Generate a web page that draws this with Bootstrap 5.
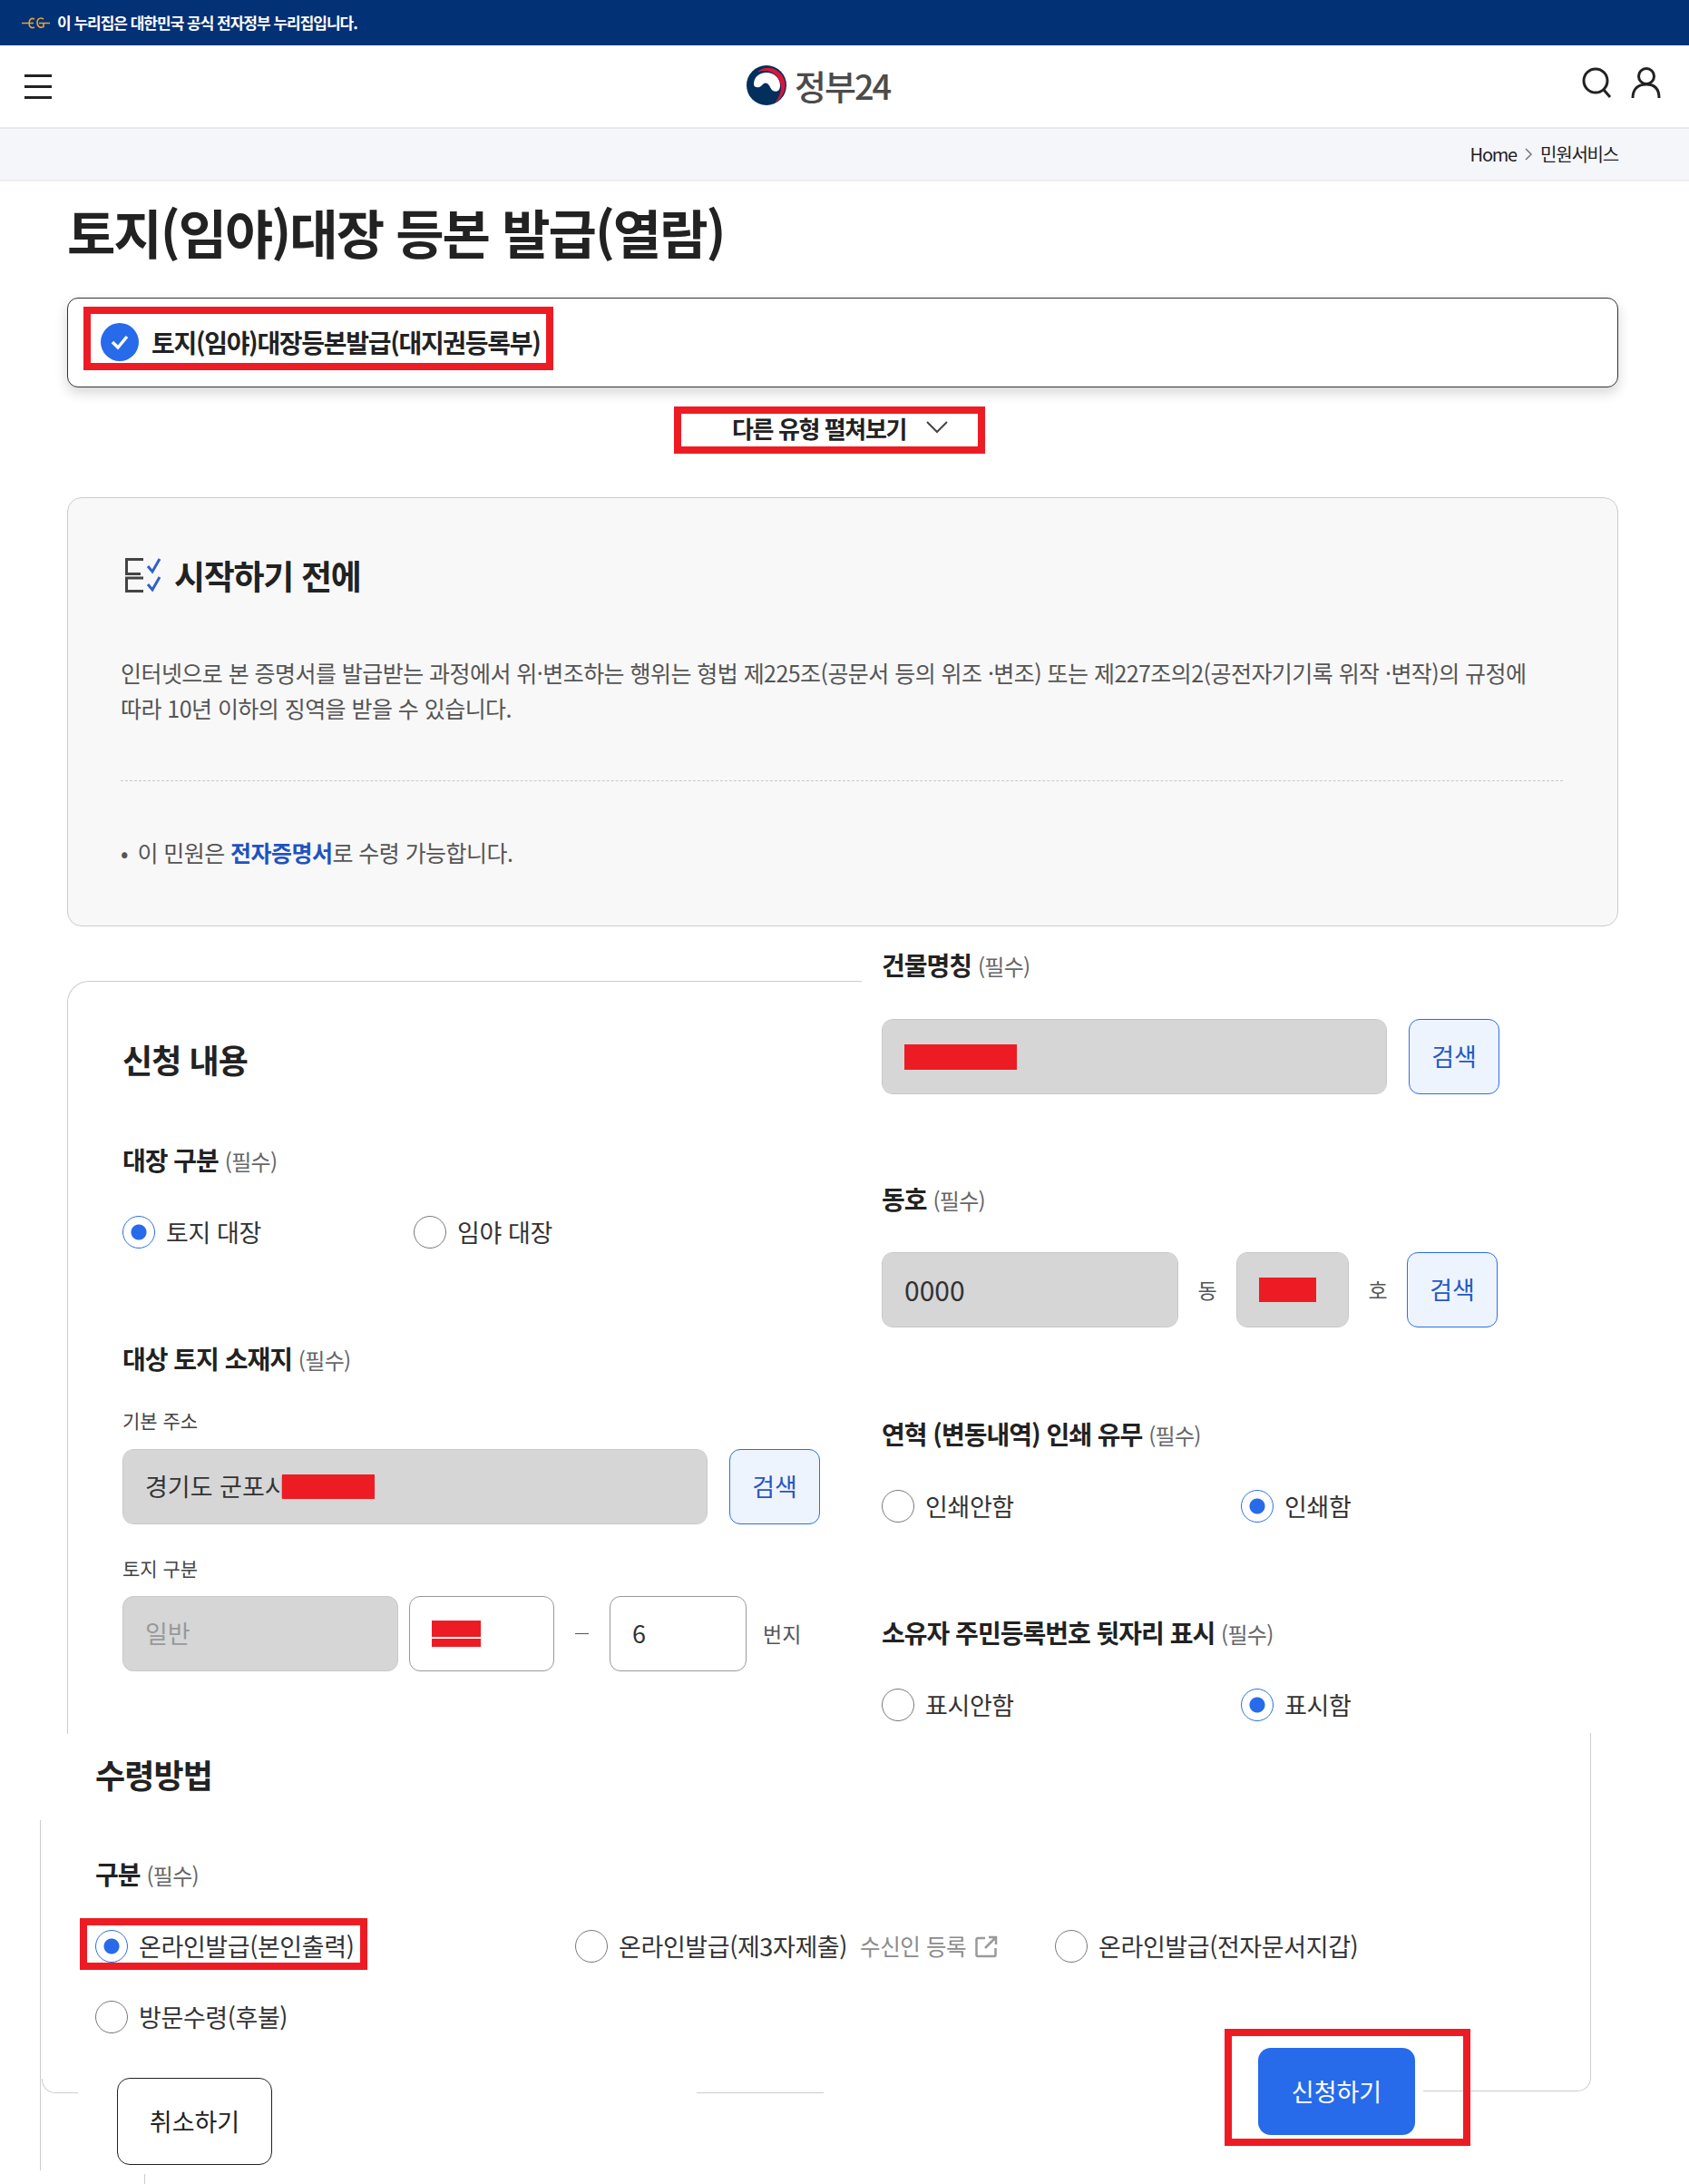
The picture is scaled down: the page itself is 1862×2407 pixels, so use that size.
<!DOCTYPE html>
<html lang="ko">

<head>
  <meta charset="UTF-8">
  <title>토지(임야)대장 등본 발급(열람)</title>
  <link href="https://cdn.jsdelivr.net/npm/bootstrap@5.3.0/dist/css/bootstrap.min.css" rel="stylesheet">
  <script src="https://cdn.jsdelivr.net/npm/bootstrap@5.3.0/dist/js/bootstrap.bundle.min.js"></script>
  <style>
    body {
      font-family: "Noto Sans CJK KR", "Noto Sans", sans-serif;
      color: #222;
      background: #fff;
      height: 2407px;
      overflow: hidden;
    }

    .gov-strip {
      height: 50px;
      background: #033176;
      color: #fff;
      padding-left: 24px;
      font-size: 17px;
      font-weight: 700;
      letter-spacing: -1px;
    }

    .top-nav {
      height: 90px;
      padding: 0 31px 0 27px;
    }

    .burger {
      width: 30px;
    }

    .burger i {
      display: block;
      height: 3px;
      background: #222;
      margin: 9px 0;
    }

    .logo-txt {
      font-size: 38px;
      font-weight: 500;
      color: #4b4b4b;
      letter-spacing: -2px;
      line-height: 1;
    }

    .logo-link {
      margin: 0 0 2px 765px;
    }

    .nav-icons {
      margin-bottom: 9px;
      gap: 21px;
    }

    .crumb-bar {
      height: 60px;
      background: #f5f6fa;
      border-top: 2px solid #e6e8f0;
      border-bottom: 2px solid #eeeeee;
      padding-right: 78px;
      font-size: 20px;
      letter-spacing: -1.2px;
    }

    .page-wrap {
      padding: 0 78px 0 74px;
    }

    .page-title {
      font-size: 58px;
      font-weight: 700;
      line-height: 72px;
      letter-spacing: -2px;
      margin: 19px 0 37px;
      color: #222;
    }

    .type-box {
      height: 99px;
      border: 1px solid #333;
      border-radius: 12px;
      background: #fff;
      box-shadow: 0 6px 14px rgba(0, 0, 0, .16);
      padding: 9px 0 0 17px;
    }

    .red-mark {
      border: 8px solid #ed1c24;
    }

    .type-mark {
      height: 70px;
      width: 518px;
      padding: 8px 0 0 11px;
      gap: 14px;
      font-size: 28px;
      font-weight: 700;
      letter-spacing: -1.3px;
    }

    .more-mark {
      height: 52px;
      width: 343px;
      margin: 21px 0 0 669px;
      padding: 0 0 6px 56px;
      gap: 22px;
      font-size: 26px;
      font-weight: 700;
      letter-spacing: -1.4px;
    }

    .notice-box {
      height: 473px;
      margin-top: 48px;
      padding: 65px 60px 0 58px;
      background: #f8f8f8;
      border: 1px solid #cccccc;
      border-radius: 16px;
      font-size: 25px;
      line-height: 39px;
      color: #555;
      letter-spacing: -.55px;
    }

    .notice-head {
      font-size: 37px;
      font-weight: 700;
      line-height: 40px;
      color: #222;
      letter-spacing: -1.3px;
      gap: 14px;
      margin: 0 0 68px 5px;
    }

    .notice-line {
      border-top: 1px dashed #c9c9c9;
      margin: 60px 0 59px;
    }

    .notice-dot {
      margin-right: 4px;
    }

    .notice-link {
      color: #1f53bf;
      font-weight: 700;
      text-decoration: none;
    }

    .form-zone {
      height: 871px;
      margin-top: 19px;
      gap: 22px;
    }

    .form-left {
      width: 876px;
      height: 830px;
      margin-top: 41px;
      border-top: 1px solid #ccc;
      border-left: 1px solid #ccc;
      border-top-left-radius: 24px;
      padding: 60px 0 0 60px;
    }

    .form-right {
      width: 790px;
      padding-top: 5px;
    }

    .sec-title {
      font-size: 36px;
      font-weight: 700;
      line-height: 50px;
      letter-spacing: -.9px;
      margin: 0;
    }

    .fld-title {
      font-size: 28px;
      font-weight: 700;
      line-height: 36px;
      letter-spacing: -1px;
      margin: 0;
    }

    .fld-title small {
      font-size: 24px;
      font-weight: 400;
      color: #666;
      letter-spacing: -.7px;
    }

    .sub-label {
      font-size: 21px;
      line-height: 30px;
      color: #444;
      margin: 0;
    }

    /* 원본 화면의 세로 간격 */
    .gap-16 { margin-top: 16px; }
    .gap-17 { margin-top: 17px; }
    .gap-29 { margin-top: 29px; }
    .gap-33 { margin-top: 33px; }
    .gap-34 { margin-top: 34px; }
    .gap-39 { margin-top: 39px; }
    .gap-40 { margin-top: 40px; }
    .gap-42 { margin-top: 42px; }
    .gap-68 { margin-top: 68px; }
    .gap-97 { margin-top: 97px; }
    .gap-99 { margin-top: 99px; }
    .gap-103 { margin-top: 103px; }

    .form-check.pick {
      display: flex;
      align-items: center;
      min-height: 36px;
      height: 36px;
      margin: 0;
      padding: 0;
      gap: 12px;
      font-size: 27px;
      letter-spacing: -.4px;
      color: #333;
    }

    .pick .form-check-input {
      float: none;
      flex: none;
      width: 36px;
      height: 36px;
      margin: 0;
      border: 1px solid #777;
      background-color: #fff;
    }

    .pick .form-check-input:checked {
      border-color: #2a6ee9;
      background-color: #fff;
      background-image: radial-gradient(circle, #276bea 0 8px, transparent 9px);
    }

    .pick-left {
      width: 321px;
    }

    .pick-right {
      width: 396px;
    }

    .field-row {
      gap: 24px;
    }

    .form-control.fld,
    .form-select.fld {
      height: 83px;
      border-radius: 12px;
      border: 1px solid #999;
      font-size: 27px;
      padding: 0 24px;
      color: #333;
      display: flex;
      align-items: center;
      flex: none;
    }

    .form-select.fld {
      display: block;
    }

    .form-control.fld.gray,
    .form-select.fld.gray {
      background-color: #d6d6d6;
      border-color: #c8c8c8;
    }

    .form-select.fld.gray {
      background-image: none;
      color: #999;
      opacity: 1;
    }

    .btn.find-btn {
      width: 100px;
      height: 83px;
      flex: none;
      border: 1px solid #2a6ee9;
      border-radius: 12px;
      background: #eef4fe;
      color: #2657c4;
      font-size: 27px;
      padding: 0;
    }

    .w-addr { width: 645px; }
    .w-bldg { width: 557px; }
    .w-land { width: 304px; margin-right: 12px; }
    .w-lot { width: 160px; }
    .w-sub { width: 151px; margin-right: 18px; }
    .form-control.fld.w-dong { width: 327px; font-size: 30px; }
    .w-ho { width: 124px; }

    .unit-txt {
      font-size: 23px;
      color: #555;
    }

    .unit-gap {
      width: 64px;
      text-align: center;
    }

    .dash-bar {
      width: 15px;
      height: 1px;
      background: #555;
      margin: 0 23px 0 23px;
    }

    .redact {
      display: block;
      background: #ed1c24;
      flex: none;
    }

    .redact-addr { width: 102px; height: 27px; margin-left: -6px; }
    .redact-bldg { width: 124px; height: 28px; }
    .redact-ho { width: 63px; height: 27px; }

    .redact-lot {
      width: 54px;
      height: 29px;
      background: linear-gradient(#ed1c24 0 18px, #fff 18px 20px, #ed1c24 20px);
    }

    .recv-wrap {
      position: relative;
      width: 1710px;
      margin-left: 44px;
      padding-top: 19px;
    }

    .recv-edge {
      position: absolute;
      top: -1px;
      right: 0;
      width: 185px;
      height: 395px;
      border-right: 1px solid #ccc;
      border-bottom: 1px solid #ccc;
      border-bottom-right-radius: 15px;
    }

    .recv-head {
      padding-left: 61px;
    }

    .recv-body {
      height: 386px;
      margin-top: 26px;
      padding-top: 41px;
      border-left: 1px solid #ccc;
    }

    .recv-pad {
      padding-left: 60px;
    }

    .recv-mark {
      height: 57px;
      width: 317px;
      margin-left: 43px;
      padding: 5px 0 0 9px;
      flex: none;
    }

    .recv-third {
      width: 529px;
      margin-left: 229px;
      padding-top: 13px;
    }

    .recv-last {
      padding-top: 13px;
    }

    .recv-hint {
      font-size: 24.500px;
      color: #8b8b8b;
      margin-left: 2px;
      gap: 10px;
    }

    .recv-foot {
      position: relative;
      height: 156px;
      margin-top: -5px;
    }

    .foot-seg {
      position: absolute;
      border-bottom: 1px solid #ccc;
    }

    .seg-one {
      left: 1px;
      top: 55px;
      width: 40px;
      height: 16px;
      border-left: 1px solid #ccc;
      border-bottom-left-radius: 15px;
    }

    .seg-two {
      left: 723px;
      top: 70px;
      width: 140px;
      height: 1px;
    }

    .btn.cancel-btn {
      width: 171px;
      height: 96px;
      margin: 54px 0 0 84px;
      border: 1px solid #222;
      border-radius: 14px;
      background: #fff;
      color: #222;
      font-size: 27px;
      flex: none;
    }

    .submit-mark {
      position: relative;
      width: 271px;
      height: 129px;
      margin-left: 1050px;
      padding: 13px 0 0 29px;
      flex: none;
    }

    .btn.submit-btn {
      width: 173px;
      height: 96px;
      border: 0;
      border-radius: 14px;
      background: #276bea;
      color: #fff;
      font-size: 27px;
      padding: 0;
    }

    .tail-tick {
      width: 1px;
      height: 11px;
      margin: 4px 0 0 159px;
      background: #ccc;
    }
  </style>
</head>

<body>
  <!-- 누리집 안내 -->
  <div class="gov-strip d-flex align-items-center gap-2">
    <svg width="31" height="15" viewBox="0 0 31 15" fill="none" stroke="#e2a33c" stroke-width="1.6">
      <path d="M0 7.5h12M19 7.5h12M14 3c-3-1.500-6 0-6 4.500s3 6 6 4.500M8 7.500h5M24 3c-3-2-7-1-7 4s4 6 7 4.500V7.500h-4" />
    </svg>
    이 누리집은 대한민국 공식 전자정부 누리집입니다.
  </div>

  <nav class="top-nav d-flex align-items-center">
    <div class="burger"><i></i><i></i><i></i></div>
    <a class="logo-link d-flex align-items-center gap-2 text-decoration-none" href="#">
      <svg width="46" height="46" viewBox="0 0 46 46">
        <circle cx="23" cy="23" r="22" fill="#022f5c" />
        <path d="M9 22C9 14 15 9 23 9c8 0 15 6 15 14 0 2-.5 4-1.500 5.500-2.500 2-6 1.500-8-1-2-3-3-7-6.500-7-3 0-4 3.500-7 4.500-3 1-6-.5-6-3z" fill="#fff" />
        <path d="M12 9C18 3 28 2 35 7c9 6 11 17 6 26-2 4-5 7-9 10 4-6 7-11 7-18C39 12 25 3 12 9z" fill="#d8163c" />
      </svg>
      <span class="logo-txt">정부24</span>
    </a>
    <div class="nav-icons ms-auto d-flex align-items-center">
      <svg width="33" height="34" viewBox="0 0 33 34" fill="none" stroke="#222" stroke-width="3">
        <circle cx="15" cy="15" r="13" />
        <path d="M24 25l7 8" />
      </svg>
      <svg width="33" height="34" viewBox="0 0 33 34" fill="none" stroke="#222" stroke-width="3">
        <circle cx="17" cy="10" r="8.500" />
        <path d="M2 34c0-9 5-15 15-15s14 6 14 15" />
      </svg>
    </div>
  </nav>

  <div class="crumb-bar d-flex align-items-center justify-content-end gap-2">
    <span>Home</span>
    <svg width="10" height="16" viewBox="0 0 10 16" fill="none" stroke="#777" stroke-width="1.500"><path d="M2 2l6 6-6 6" /></svg>
    <span>민원서비스</span>
  </div>

  <div class="page-wrap">
    <h1 class="page-title">토지(임야)대장 등본 발급(열람)</h1>

    <div class="type-box">
      <div class="red-mark type-mark d-flex align-items-center">
        <svg width="42" height="42" viewBox="0 0 42 42">
          <circle cx="21" cy="21" r="21" fill="#276bea" />
          <path d="M13 21l6 6 10-12" fill="none" stroke="#fff" stroke-width="3.500" />
        </svg>
        <span>토지(임야)대장등본발급(대지권등록부)</span>
      </div>
    </div>

    <div class="red-mark more-mark d-flex align-items-center">
      <span>다른 유형 펼쳐보기</span>
      <svg width="24" height="14" viewBox="0 0 24 14" fill="none" stroke="#444" stroke-width="2"><path d="M1 1l11 11L23 1" /></svg>
    </div>

    <div class="notice-box">
      <h2 class="notice-head d-flex align-items-center">
        <svg width="40" height="38" viewBox="0 0 40 38" fill="none" stroke-width="3">
          <path d="M20 1.500H1.500v16H17M20 22H1.500v14.500H20" stroke="#444" />
          <path d="M25 9l5 6 8-14M25 29l5 6 8-14" stroke="#2f62c8" />
        </svg>
        시작하기 전에
      </h2>
      <p class="m-0">인터넷으로 본 증명서를 발급받는 과정에서 위·변조하는 행위는 형법 제225조(공문서 등의 위조 ·변조) 또는 제227조의2(공전자기기록 위작 ·변작)의 규정에<br>따라 10년 이하의 징역을 받을 수 있습니다.</p>
      <div class="notice-line"></div>
      <p class="m-0"><span class="notice-dot">•</span> 이 민원은 <a class="notice-link" href="#">전자증명서</a>로 수령 가능합니다.</p>
    </div>

    <div class="form-zone d-flex">
      <div class="form-left">
        <h2 class="sec-title">신청 내용</h2>
        <p class="fld-title gap-68">대장 구분 <small>(필수)</small></p>
        <div class="d-flex gap-42">
          <label class="form-check pick pick-left"><input class="form-check-input" type="radio" name="ledger" checked>토지 대장</label>
          <label class="form-check pick"><input class="form-check-input" type="radio" name="ledger">임야 대장</label>
        </div>
        <p class="fld-title gap-103">대상 토지 소재지 <small>(필수)</small></p>
        <p class="sub-label gap-33">기본 주소</p>
        <div class="d-flex field-row gap-17">
          <div class="form-control fld gray w-addr">경기도 군포시<span class="redact redact-addr"></span></div>
          <button class="btn find-btn" type="button">검색</button>
        </div>
        <p class="sub-label gap-33">토지 구분</p>
        <div class="d-flex align-items-center gap-16">
          <select class="form-select fld gray w-land" disabled><option>일반</option></select>
          <div class="form-control fld w-lot"><span class="redact redact-lot"></span></div>
          <span class="dash-bar"></span>
          <div class="form-control fld w-sub">6</div>
          <span class="unit-txt">번지</span>
        </div>
      </div>

      <div class="form-right">
        <p class="fld-title">건물명칭 <small>(필수)</small></p>
        <div class="d-flex field-row gap-40">
          <div class="form-control fld gray w-bldg"><span class="redact redact-bldg"></span></div>
          <button class="btn find-btn" type="button">검색</button>
        </div>
        <p class="fld-title gap-97">동호 <small>(필수)</small></p>
        <div class="d-flex align-items-center gap-39">
          <div class="form-control fld gray w-dong">0000</div>
          <span class="unit-txt unit-gap">동</span>
          <div class="form-control fld gray w-ho"><span class="redact redact-ho"></span></div>
          <span class="unit-txt unit-gap">호</span>
          <button class="btn find-btn" type="button">검색</button>
        </div>
        <p class="fld-title gap-99">연혁 (변동내역) 인쇄 유무 <small>(필수)</small></p>
        <div class="d-flex gap-42">
          <label class="form-check pick pick-right"><input class="form-check-input" type="radio" name="history">인쇄안함</label>
          <label class="form-check pick"><input class="form-check-input" type="radio" name="history" checked>인쇄함</label>
        </div>
        <p class="fld-title gap-103">소유자 주민등록번호 뒷자리 표시 <small>(필수)</small></p>
        <div class="d-flex gap-42">
          <label class="form-check pick pick-right"><input class="form-check-input" type="radio" name="owner">표시안함</label>
          <label class="form-check pick"><input class="form-check-input" type="radio" name="owner" checked>표시함</label>
        </div>
      </div>
    </div>
  </div>

  <!-- 수령방법 -->
  <div class="recv-wrap">
    <div class="recv-edge"></div>
    <h2 class="sec-title recv-head">수령방법</h2>
    <div class="recv-body">
      <p class="fld-title recv-pad">구분 <small>(필수)</small></p>
      <div class="d-flex gap-29">
        <div class="red-mark recv-mark">
          <label class="form-check pick"><input class="form-check-input" type="radio" name="recv" checked>온라인발급(본인출력)</label>
        </div>
        <div class="recv-third">
          <label class="form-check pick"><input class="form-check-input" type="radio" name="recv">온라인발급(제3자제출)
            <span class="recv-hint d-inline-flex align-items-center">수신인 등록
              <svg width="25" height="25" viewBox="0 0 25 25" fill="none" stroke="#9a9a9a" stroke-width="2.500">
                <path d="M11 3H3a1.500 1.500 0 0 0-1.500 1.500v17A1.500 1.500 0 0 0 3 23h18a1.500 1.500 0 0 0 1.500-1.500V14M11 14L23 2M15 2h8v8" />
              </svg>
            </span>
          </label>
        </div>
        <div class="recv-last">
          <label class="form-check pick"><input class="form-check-input" type="radio" name="recv">온라인발급(전자문서지갑)</label>
        </div>
      </div>
      <div class="recv-pad gap-34">
        <label class="form-check pick"><input class="form-check-input" type="radio" name="recv">방문수령(후불)</label>
      </div>
      <div class="recv-foot d-flex">
        <div class="foot-seg seg-one"></div>
        <div class="foot-seg seg-two"></div>
        <button class="btn cancel-btn" type="button">취소하기</button>
        <div class="red-mark submit-mark">
          <button class="btn submit-btn" type="button">신청하기</button>
        </div>
      </div>
    </div>
  </div>
  <div class="tail-tick"></div>
</body>

</html>
